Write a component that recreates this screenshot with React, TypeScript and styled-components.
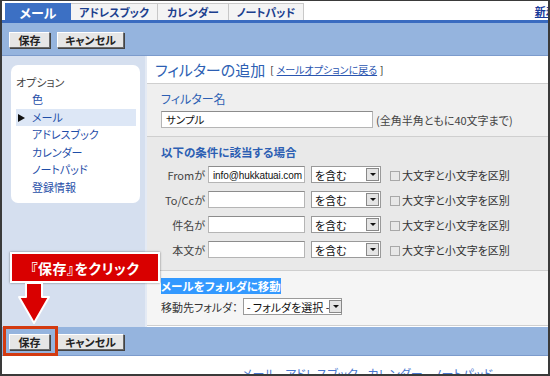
import styled, { createGlobalStyle } from 'styled-components';

const GlobalStyle = createGlobalStyle`
  html, body {
    margin: 0;
    padding: 0;
    background: #fff;
  }
  body {
    font-family: "Noto Sans CJK JP", "Liberation Sans", sans-serif;
    font-feature-settings: "palt";
    font-size: 12px;
    color: #333;
  }
`;

const Frame = styled.div`
  position: relative;
  width: 550px;
  height: 376px;
  box-sizing: border-box;
  border: 2px solid #3a3a3a;
  border-top-width: 1px;
  overflow: hidden;
  display: flex;
  flex-direction: column;
  background: #fff;
`;

const TabBar = styled.div`
  height: 19px;
  flex-shrink: 0;
  display: flex;
  align-items: flex-end;
  padding-left: 3px;
  background: #fff;
`;

const Tab = styled.div<{ $active?: boolean; $w: number }>`
  width: ${({ $w }) => $w}px;
  height: 17px;
  box-sizing: border-box;
  display: flex;
  align-items: center;
  justify-content: center;
  font-weight: bold;
  font-size: ${({ $active }) => ($active ? '13px' : '11px')};
  color: ${({ $active }) => ($active ? '#fff' : '#1c3f8e')};
  background: ${({ $active }) => ($active ? '#3c70c4' : '#f4f4f4')};
  border: 1px solid ${({ $active }) => ($active ? '#3c70c4' : '#c8c8c8')};
  border-bottom: none;
  border-left: ${({ $active }) => ($active ? '1px solid #3c70c4' : 'none')};
`;

const NewLink = styled.a`
  margin-left: auto;
  margin-right: -40px;
  align-self: center;
  font-size: 11px;
  font-weight: bold;
  color: #1a3a9a;
  text-decoration: underline;
  white-space: nowrap;
`;

const TabLine = styled.div`
  height: 3px;
  flex-shrink: 0;
  background: #3a6bc0;
`;

const Toolbar = styled.div<{ $h: number }>`
  height: ${({ $h }) => $h}px;
  flex-shrink: 0;
  box-sizing: border-box;
  background: #95b4de;
  border-bottom: 1px solid #7c9bcc;
  display: flex;
  align-items: center;
  gap: 7px;
  padding: 2px 0 0 7px;
`;

const Button = styled.button<{ $w: number }>`
  width: ${({ $w }) => $w}px;
  height: 16px;
  padding: 0;
  box-sizing: border-box;
  background: #e6e6e6;
  border: 1px solid;
  border-color: #fff #6a6a6a #6a6a6a #fff;
  box-shadow: 1px 1px 0 #444;
  font-family: "Noto Sans CJK JP", sans-serif;
  font-feature-settings: "palt";
  font-weight: bold;
  font-size: 11px;
  line-height: 14px;
  color: #222;
`;

const Body = styled.div`
  height: 271px;
  flex-shrink: 0;
  display: flex;
`;

const Sidebar = styled.div`
  width: 143px;
  flex-shrink: 0;
  background: #d5dfef;
  padding: 9px 5px 0 9px;
  box-sizing: border-box;
`;

const MenuBox = styled.div`
  background: #fff;
  border-radius: 7px;
  padding: 8px 4px 10px 5px;
  height: 138px;
  box-sizing: border-box;
`;

const MenuHeading = styled.div`
  font-size: 11px;
  color: #444;
  height: 18px;
  line-height: 18px;
`;

const MenuItem = styled.div<{ $active?: boolean }>`
  position: relative;
  height: 17.5px;
  line-height: 17.5px;
  padding-left: 16px;
  font-size: 11px;
  color: #1f4ea8;
  background: ${({ $active }) => ($active ? '#dde7f6' : 'transparent')};
`;

const Pointer = styled.span`
  position: absolute;
  left: 2px;
  top: 5px;
  width: 0;
  height: 0;
  border-top: 4px solid transparent;
  border-bottom: 4px solid transparent;
  border-left: 7px solid #111;
`;

const Main = styled.div`
  flex: 1;
  display: flex;
  flex-direction: column;
  border-left: 2px solid #e4eaf4;
`;

const Header = styled.div`
  height: 28px;
  box-sizing: border-box;
  background: #fff;
  border-bottom: 1px solid #cfcfcf;
  display: flex;
  align-items: center;
  padding-left: 8px;
  gap: 5px;
`;

const Title = styled.div`
  font-size: 15px;
  color: #2d5fb3;
`;

const BackLink = styled.span`
  font-size: 10px;
  color: #222;
  a {
    color: #2a55b0;
    text-decoration: underline;
    margin: 0 3px;
  }
`;

const Section = styled.div<{ $h: number; $bg: string }>`
  height: ${({ $h }) => $h}px;
  box-sizing: border-box;
  background: ${({ $bg }) => $bg};
  border-bottom: 1px solid #cfcfcf;
  padding: 7px 0 0 14px;
`;

const SectionLabel = styled.div<{ $bold?: boolean }>`
  font-size: ${({ $bold }) => ($bold ? '11.5px' : '12px')};
  font-weight: ${({ $bold }) => ($bold ? 'bold' : 'normal')};
  color: #2d5fb3;
  height: 16px;
  line-height: 16px;
`;

const NameRow = styled.div`
  display: flex;
  align-items: center;
  gap: 3px;
  margin-top: 4px;
`;

const TextInput = styled.div<{ $w: number }>`
  width: ${({ $w }) => $w}px;
  height: 17px;
  box-sizing: border-box;
  background: #fff;
  border: 1px solid #b5b5b5;
  border-top-color: #8c8c8c;
  font-size: 10.5px;
  line-height: 15px;
  padding-left: 4px;
  color: #111;
  white-space: nowrap;
  overflow: hidden;
`;

const MailValue = styled.span`
  font-family: "Liberation Sans", Arial, sans-serif;
  font-size: 10px;
  letter-spacing: -0.1px;
`;

const Note = styled.span`
  font-size: 11px;
  color: #444;
`;

const CondRow = styled.div`
  display: flex;
  align-items: center;
  height: 25px;
`;

const RowLabel = styled.div`
  width: 44px;
  text-align: right;
  font-size: 11px;
  color: #444;
  margin-right: 3px;
`;

const Select = styled.div<{ $w: number }>`
  width: ${({ $w }) => $w}px;
  height: 17px;
  box-sizing: border-box;
  background: #fff;
  border: 1px solid #9a9a9a;
  display: flex;
  align-items: center;
  justify-content: space-between;
  font-size: 11px;
  color: #111;
  padding-left: 3px;
  padding-right: 1px;
  white-space: nowrap;
`;

const Drop = styled.span`
  width: 13px;
  height: 13px;
  flex-shrink: 0;
  box-sizing: border-box;
  background: #e4e4e4;
  border: 1px solid #888;
  display: flex;
  align-items: center;
  justify-content: center;
  &::after {
    content: '';
    border-left: 3px solid transparent;
    border-right: 3px solid transparent;
    border-top: 3px solid #111;
  }
`;

const Check = styled.span`
  width: 10px;
  height: 10px;
  box-sizing: border-box;
  border: 1px solid #a8a8a8;
  background: #e8e8e8;
  margin: 3px 2px 0 9px;
`;

const CheckLabel = styled.span`
  font-size: 11px;
  color: #333;
`;

const Selected = styled.span`
  font-size: 11.5px;
  font-weight: bold;
  color: #fff;
  background: #3399ff;
  line-height: 15px;
`;

const MoveRow = styled.div`
  display: flex;
  align-items: center;
  gap: 5px;
  margin-top: 4px;
  font-size: 11px;
  color: #333;
`;

const Footer = styled.div`
  flex: 1;
  background: #fff;
  display: flex;
  padding-top: 9px;
  padding-left: 240px;
  font-size: 12px;
  color: #4a78d0;
  white-space: nowrap;
  a {
    color: #4a78d0;
    text-decoration: underline;
  }
`;

const Callout = styled.div`
  position: absolute;
  left: 8px;
  top: 251px;
  width: 150px;
  height: 31px;
  box-sizing: border-box;
  background: #d90000;
  border: 2px solid #fff;
  box-shadow: 0 0 2px rgba(0, 0, 0, 0.5);
  color: #fff;
  font-weight: bold;
  font-size: 14px;
  display: flex;
  align-items: center;
  justify-content: center;
  letter-spacing: 0.5px;
`;

const Arrow = styled.svg`
  position: absolute;
  left: 11px;
  top: 281px;
`;

const Highlight = styled.div`
  position: absolute;
  left: 1px;
  top: 325px;
  width: 55px;
  height: 30px;
  box-sizing: border-box;
  border: 3px solid #d33a10;
`;

const conditions = [
  { label: 'Fromが', value: 'info@hukkatuai.com' },
  { label: 'To/Ccが', value: '' },
  { label: '件名が', value: '' },
  { label: '本文が', value: '' },
];

export default function App() {
  return (
    <>
      <GlobalStyle />
      <Frame>
        <TabBar>
          <Tab $active $w={66}>メール</Tab>
          <Tab $w={87}>アドレスブック</Tab>
          <Tab $w={71}>カレンダー</Tab>
          <Tab $w={75}>ノートパッド</Tab>
          <NewLink>新着メール</NewLink>
        </TabBar>
        <TabLine />
        <Toolbar $h={33}>
          <Button $w={41}>保存</Button>
          <Button $w={67}>キャンセル</Button>
        </Toolbar>
        <Body>
          <Sidebar>
            <MenuBox>
              <MenuHeading>オプション</MenuHeading>
              <MenuItem>色</MenuItem>
              <MenuItem $active>
                <Pointer />
                メール
              </MenuItem>
              <MenuItem>アドレスブック</MenuItem>
              <MenuItem>カレンダー</MenuItem>
              <MenuItem>ノートパッド</MenuItem>
              <MenuItem>登録情報</MenuItem>
            </MenuBox>
          </Sidebar>
          <Main>
            <Header>
              <Title>フィルターの追加</Title>
              <BackLink>
                [<a>メールオプションに戻る</a>]
              </BackLink>
            </Header>
            <Section $h={53} $bg="#efefef">
              <SectionLabel>フィルター名</SectionLabel>
              <NameRow>
                <TextInput $w={212}>サンプル</TextInput>
                <Note>(全角半角ともに40文字まで)</Note>
              </NameRow>
            </Section>
            <Section $h={134} $bg="#e9e9e9">
              <SectionLabel $bold>以下の条件に該当する場合</SectionLabel>
              <div style={{ marginTop: 2 }}>
                {conditions.map((c) => (
                  <CondRow key={c.label}>
                    <RowLabel>{c.label}</RowLabel>
                    <TextInput $w={97}>
                      <MailValue>{c.value}</MailValue>
                    </TextInput>
                    <div style={{ width: 6 }} />
                    <Select $w={70}>
                      を含む
                      <Drop />
                    </Select>
                    <Check />
                    <CheckLabel>大文字と小文字を区別</CheckLabel>
                  </CondRow>
                ))}
              </div>
            </Section>
            <Section $h={55} $bg="#f5f5f5">
              <SectionLabel>
                <Selected>メールをフォルダに移動</Selected>
              </SectionLabel>
              <MoveRow>
                移動先フォルダ：
                <Select $w={99}>
                  - フォルダを選択 -
                  <Drop />
                </Select>
              </MoveRow>
            </Section>
          </Main>
        </Body>
        <Toolbar $h={29}>
          <Button $w={41}>保存</Button>
          <Button $w={67}>キャンセル</Button>
        </Toolbar>
        <Footer>
          <a>メール</a>&nbsp;-&nbsp;<a>アドレスブック</a>&nbsp;-&nbsp;<a>カレンダー</a>&nbsp;-&nbsp;<a>ノートパッド</a>
        </Footer>
        <Callout>『保存』をクリック</Callout>
        <Arrow width="38" height="44" viewBox="0 0 38 44">
          <path
            d="M13 1 H29 V15 H36 L21 41 L6 15 H13 Z"
            fill="#d90000"
            stroke="#fff"
            strokeWidth="2"
            strokeLinejoin="round"
          />
        </Arrow>
        <Highlight />
      </Frame>
    </>
  );
}
